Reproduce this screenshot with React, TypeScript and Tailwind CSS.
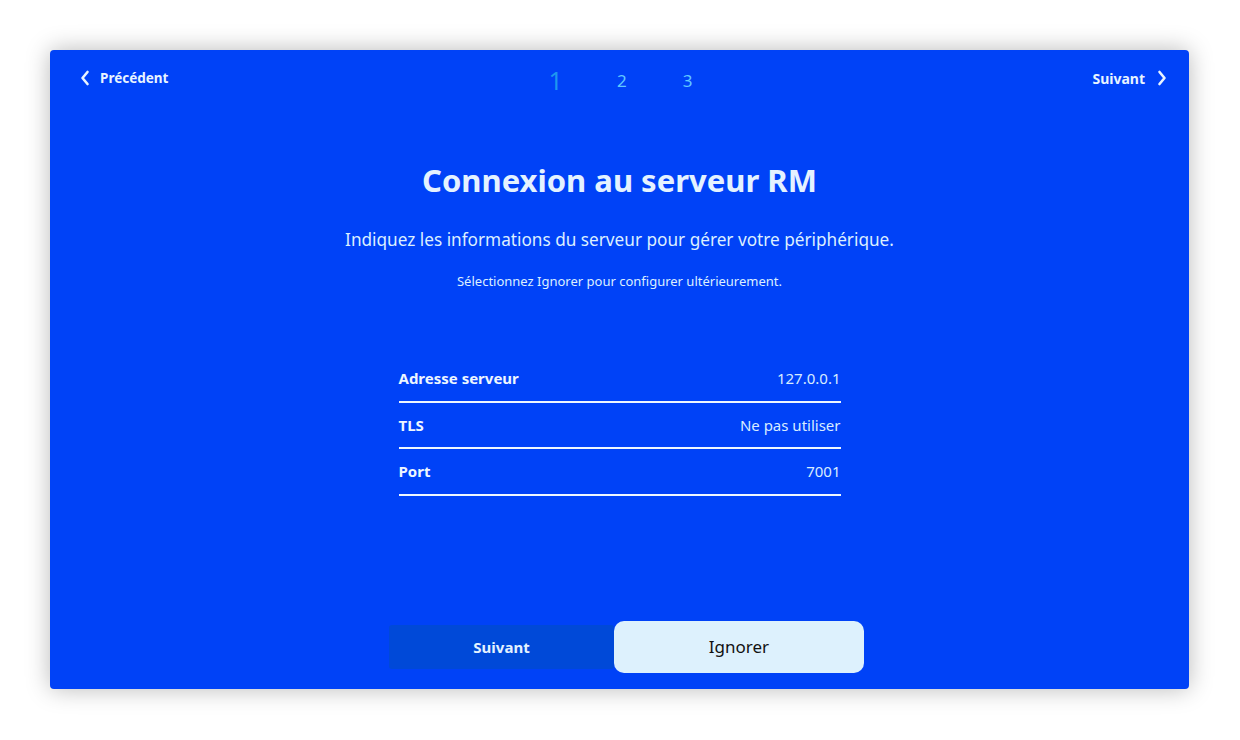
import React from "react";

const Chevron = ({ dir }: { dir: "left" | "right" }) => (
  <svg width="10" height="16" viewBox="0 0 10 16" fill="none">
    {dir === "left" ? (
      <path d="M7.5 2 L2.5 8 L7.5 14" stroke="#e8f4ff" strokeWidth="2.6" strokeLinecap="round" strokeLinejoin="round" />
    ) : (
      <path d="M2.5 2 L7.5 8 L2.5 14" stroke="#e8f4ff" strokeWidth="2.6" strokeLinecap="round" strokeLinejoin="round" />
    )}
  </svg>
);

const Row = ({ label, value }: { label: string; value: string }) => (
  <div className="flex h-[46.5px] items-center justify-between border-b-2 border-[#eef6ff]">
    <span className="text-[15px] font-bold text-[#eef6ff]">{label}</span>
    <span className="text-[15px] text-[#d8ecff]">{value}</span>
  </div>
);

export default function App() {
  return (
    <div
      className="h-[740px] w-[1240px] bg-white pl-[50px] pt-[50px]"
      style={{ fontFamily: '"Noto Sans", "Open Sans", sans-serif' }}
    >
      <div className="flex h-[639px] w-[1139px] flex-col rounded-[4px] bg-[#0042f7] shadow-[0_0_24px_rgba(0,0,0,0.28)]">
        <div className="flex h-[56px] items-center justify-between pl-[30px] pr-[22px]">
          <div className="flex w-[200px] items-center gap-[10px]">
            <Chevron dir="left" />
            <span className="text-[13.5px] font-bold text-[#e8f4ff]">Précédent</span>
          </div>
          <div className="flex items-center pt-[5px] pr-[6px]">
            <span className="mr-[54px] text-[25px] leading-none text-[#1e96f0]">1</span>
            <span className="mr-[56px] text-[17px] leading-none text-[#60c8ff]">2</span>
            <span className="text-[17px] leading-none text-[#60c8ff]">3</span>
          </div>
          <div className="flex w-[200px] items-center justify-end gap-[12px]">
            <span className="text-[14px] font-bold text-[#e8f4ff]">Suivant</span>
            <Chevron dir="right" />
          </div>
        </div>

        <div className="flex flex-col items-center pt-[52px]">
          <h1 className="text-[31px] font-bold leading-[44px] text-[#e4f2ff]">Connexion au serveur RM</h1>
          <p className="mt-[26px] text-[17.2px] leading-[24px] text-[#dcefff]">
            Indiquez les informations du serveur pour gérer votre périphérique.
          </p>
          <p className="mt-[21px] text-[13px] leading-[16px] text-[#dcefff]">
            Sélectionnez Ignorer pour configurer ultérieurement.
          </p>
        </div>

        <div className="mx-auto mt-[67px] w-[442px]">
          <Row label="Adresse serveur" value="127.0.0.1" />
          <Row label="TLS" value="Ne pas utiliser" />
          <Row label="Port" value="7001" />
        </div>

        <div className="mt-auto mb-[16px] flex items-center justify-center pl-[14px]">
          <button className="flex h-[44px] w-[225px] items-center justify-center rounded-[3px] bg-[#0049d8] text-[15px] font-bold text-[#e4f2ff]">
            Suivant
          </button>
          <button className="flex h-[52px] w-[250px] items-center justify-center rounded-[10px] bg-[#ddf1fd] text-[17px] text-[#111]">
            Ignorer
          </button>
        </div>
      </div>
    </div>
  );
}
